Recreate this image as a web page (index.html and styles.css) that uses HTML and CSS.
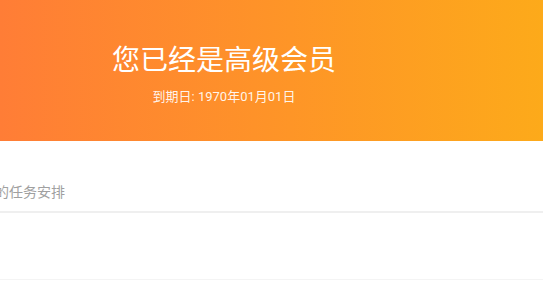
FILE: index.html
```html
<!DOCTYPE html>
<html lang="zh-CN">
<head>
<meta charset="utf-8">
<title>会员</title>
<link rel="stylesheet" href="styles.css">
</head>
<body>
<div class="page">
  <header class="vip-header">
    <h1 class="vip-title">您已经是高级会员</h1>
    <p class="vip-expire">到期日: 1970年01月01日</p>
  </header>
  <ul class="list">
    <li class="list-item list-item--first"><span class="item-desc">的任务安排</span></li>
    <li class="list-item list-item--second"></li>
  </ul>
</div>
</body>
</html>
```

FILE: styles.css
```css
html, body {
  margin: 0;
  padding: 0;
  background: #ffffff;
  overflow: hidden;
}

body {
  font-family: Roboto, "Noto Sans CJK SC", sans-serif;
}

.page {
  width: 638px;
  margin-left: -95px;
}

.vip-header {
  height: 141px;
  box-sizing: border-box;
  padding-top: 38px;
  display: flex;
  flex-direction: column;
  align-items: center;
  background: linear-gradient(90deg, #ff7d36 14.9%, #fdaa1a 100%);
}

.vip-title {
  margin: 0;
  font-family: "Noto Sans CJK SC", sans-serif;
  font-weight: 400;
  font-size: 28px;
  line-height: 40px;
  color: #ffffff;
}

.vip-expire {
  margin: 9px 0 0;
  font-size: 13px;
  line-height: 20px;
  color: rgba(255, 255, 255, 0.92);
}

.list {
  list-style: none;
  margin: 0;
  padding: 0;
}

.list-item {
  display: flex;
  padding-left: 90px;
}

.list-item--first {
  height: 72px;
  box-sizing: border-box;
  padding-top: 40px;
  border-bottom: 2px solid #efefef;
}

.list-item--second {
  height: 67px;
  box-sizing: border-box;
  border-bottom: 1px solid #f4f4f4;
}

.item-desc {
  font-family: "Noto Sans CJK SC", sans-serif;
  font-size: 14px;
  line-height: 20px;
  color: #a0a0a0;
}
```
